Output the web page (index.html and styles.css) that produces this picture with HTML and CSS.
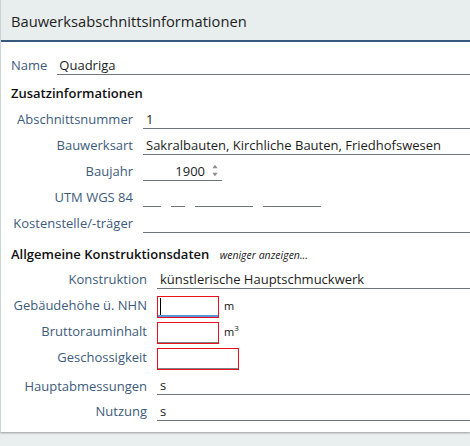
FILE: index.html
```html
<!DOCTYPE html>
<html lang="de">
<head>
<meta charset="utf-8">
<title>Bauwerksabschnittsinformationen</title>
<link rel="stylesheet" href="styles.css">
</head>
<body>
<div class="panel">
  <div class="panel-header">Bauwerksabschnittsinformationen</div>
  <div class="panel-body">
    <div class="row row-name">
      <span class="lbl lbl-auto">Name</span>
      <div class="field">Quadriga</div>
    </div>

    <div class="section-title section-first">Zusatzinformationen</div>
    <div class="group group-a">
      <div class="row">
        <span class="lbl">Abschnittsnummer</span>
        <div class="field">1</div>
      </div>
      <div class="row">
        <span class="lbl">Bauwerksart</span>
        <div class="field">Sakralbauten, Kirchliche Bauten, Friedhofswesen</div>
      </div>
      <div class="row">
        <span class="lbl">Baujahr</span>
        <div class="field field-number">
          <span class="num">1900</span>
          <svg class="spin" width="6" height="13" viewBox="0 0 6 13" aria-hidden="true">
            <path d="M3 0.8 L5.6 4.2 L0.4 4.2 Z" fill="#8a8f93"/>
            <path d="M3 12.2 L5.6 8.8 L0.4 8.8 Z" fill="#8a8f93"/>
          </svg>
        </div>
      </div>
      <div class="row">
        <span class="lbl">UTM WGS 84</span>
        <div class="utm">
          <div class="field seg seg-1"></div>
          <div class="field seg seg-2"></div>
          <div class="field seg seg-3"></div>
          <div class="field seg seg-4"></div>
        </div>
      </div>
      <div class="row">
        <span class="lbl">Kostenstelle/-träger</span>
        <div class="field"></div>
      </div>
    </div>

    <div class="section-title section-second">Allgemeine Konstruktionsdaten <span class="toggle">weniger anzeigen...</span></div>
    <div class="group group-b">
      <div class="row">
        <span class="lbl">Konstruktion</span>
        <div class="field">künstlerische Hauptschmuckwerk</div>
      </div>
      <div class="row row-box row-box-first">
        <span class="lbl lbl-box">Gebäudehöhe ü. NHN</span>
        <div class="box box-small box-focus"><span class="caret"></span></div>
        <span class="unit">m</span>
      </div>
      <div class="row row-box">
        <span class="lbl lbl-box">Bruttorauminhalt</span>
        <div class="box box-small"></div>
        <span class="unit">m<sup>3</sup></span>
      </div>
      <div class="row row-box">
        <span class="lbl lbl-box">Geschossigkeit</span>
        <div class="box box-wide"></div>
      </div>
      <div class="row row-tight">
        <span class="lbl">Hauptabmessungen</span>
        <div class="field">s</div>
      </div>
      <div class="row">
        <span class="lbl">Nutzung</span>
        <div class="field">s</div>
      </div>
    </div>
  </div>
</div>
</body>
</html>
```
FILE: styles.css
```css
html, body {
  margin: 0;
  padding: 0;
}
body {
  width: 470px;
  height: 446px;
  overflow: hidden;
  background: #e9eeee;
  font-family: "Open Sans", "Noto Sans", sans-serif;
  font-size: 13px;
  color: #1c1c1c;
}
.panel {
  background: #ffffff;
  border-left: 1px solid #cdd3d3;
  box-shadow: 0 1px 2px rgba(0, 0, 0, 0.35);
}
.panel-header {
  height: 40px;
  line-height: 40px;
  padding: 1px 0 0 10px;
  box-sizing: border-box;
  background: #e8eded;
  border-bottom: 2px solid #355a7c;
  box-sizing: content-box;
  height: 39px;
  font-size: 14.7px;
  color: #1e1e1e;
}
.panel-body {
  padding: 7px 0 11px 10px;
}
.row {
  display: flex;
  height: 26px;
}
.lbl {
  flex: none;
  box-sizing: border-box;
  padding-top: 7px;
  line-height: 18px;
  text-align: right;
  color: #3e5b7c;
  white-space: nowrap;
}
.lbl-auto {
  text-align: left;
  margin-right: 10px;
}
.group-a .lbl {
  width: 122px;
  margin-right: 10px;
}
.group-b .lbl {
  width: 136px;
  margin-right: 10px;
}
.field {
  flex: 1;
  box-sizing: border-box;
  height: 26px;
  padding: 7px 0 0 3px;
  line-height: 18px;
  border-bottom: 1px solid #6f767a;
  white-space: nowrap;
  overflow: hidden;
}
.row-name .field {
  padding-left: 2px;
}
.section-title {
  font-weight: 600;
  color: #111;
  line-height: 20px;
}
.section-first {
  padding-top: 8px;
}
.section-second {
  padding-top: 14px;
  line-height: 15px;
}
.toggle {
  font-weight: 400;
  font-style: italic;
  font-size: 10.5px;
  color: #222;
  margin-left: 7px;
}
.field-number {
  flex: none;
  width: 79px;
  display: flex;
  justify-content: flex-end;
  align-items: flex-start;
  padding-right: 4px;
}
.field-number .num {
  margin-right: 7px;
}
.spin {
  margin-top: 2px;
  margin-top: 2px;
  position: relative;
  top: 0;
}
.utm {
  display: flex;
  gap: 10px;
}
.seg {
  flex: none;
}
.seg-1 { width: 18px; }
.seg-2 { width: 14px; }
.seg-3 { width: 58px; }
.seg-4 { width: 58px; }
.row-box-first {
  margin-top: 3px;
}
.row-tight {
  height: 25px;
}
.row-tight .field {
  height: 25px;
  padding-top: 6px;
}
.lbl-box {
  padding-top: 4px;
}
.row-box {
  align-items: flex-end;
}
.row-box .lbl {
  align-self: flex-start;
}
.box {
  flex: none;
  box-sizing: border-box;
  height: 22px;
  border: 1px solid #e8121a;
  box-shadow: inset 0 -1px 0 #7d8286;
  position: relative;
}
.box-small {
  width: 62px;
}
.box-wide {
  width: 82px;
}
.box-focus {
  box-shadow: inset 0 -2px 0 #5e92d6;
}
.caret {
  display: block;
  width: 1px;
  height: 17px;
  margin: 1px 0 0 2px;
  background: #000;
}
.unit {
  align-self: flex-start;
  padding-top: 5px;
  margin-left: 5px;
  font-size: 11px;
  line-height: 18px;
  color: #111;
}
.unit sup {
  font-size: 8px;
  line-height: 0;
  vertical-align: 5px;
}
```
